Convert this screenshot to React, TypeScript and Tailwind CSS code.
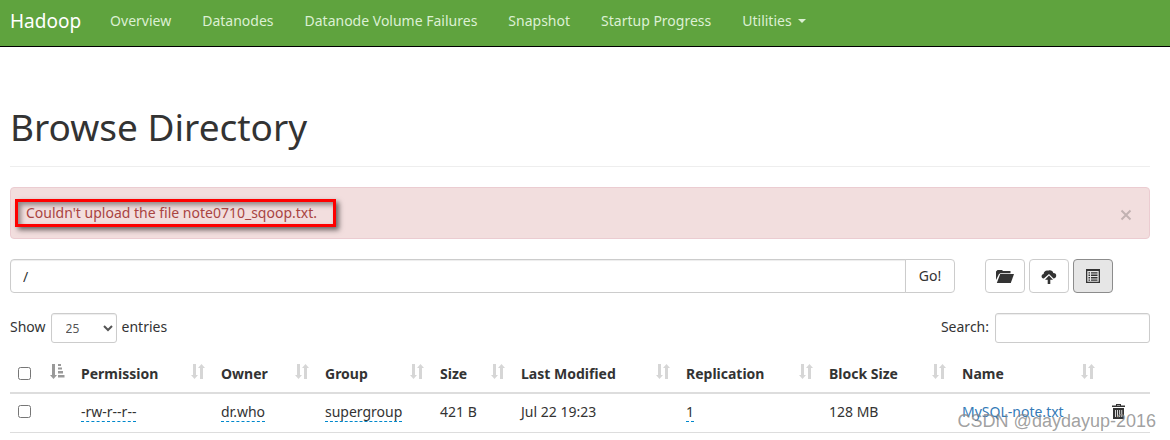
import React, { useState } from "react";

const navItems = ["Overview", "Datanodes", "Datanode Volume Failures", "Snapshot", "Startup Progress"];

const columns = [
  { label: "Permission", width: "w-[140px]" },
  { label: "Owner", width: "w-[104px]" },
  { label: "Group", width: "w-[115px]" },
  { label: "Size", width: "w-[81px]" },
  { label: "Last Modified", width: "w-[165px]" },
  { label: "Replication", width: "w-[143px]" },
  { label: "Block Size", width: "w-[133px]" },
  { label: "Name", width: "w-[149px]" },
];

function SortBoth() {
  return (
    <svg width="14" height="15" viewBox="0 0 14 15" fill="currentColor" className="mb-1 shrink-0 text-[#d6d6d6]" aria-hidden="true">
      <path d="M2 0h3v11h2L3.500 15 0 11h2z" />
      <path d="M9 15h3V4h2L10.500 0 7 4h2z" />
    </svg>
  );
}

function SortAscending() {
  return (
    <svg width="15" height="15" viewBox="0 0 15 15" fill="currentColor" className="mb-1 shrink-0 text-[#999999]" aria-hidden="true">
      <path d="M2 0h3v11h2L3.500 15 0 11h2z" />
      <path d="M8 0h3v2H8zM8 3.500h4v2H8zM8 7h5v2.500H8zM8 11h6.500v2.500H8z" />
    </svg>
  );
}

function FolderIcon() {
  return (
    <svg width="18" height="14" viewBox="0 0 18 14" fill="currentColor" aria-hidden="true">
      <path d="M0 11V2.500L1.500 1H6l1 1h7.500v2.200H4.500L3 5z" />
      <path d="M4.200 5H18l-3.200 9H.8z" />
    </svg>
  );
}

function CloudUploadIcon() {
  return (
    <svg width="16" height="15" viewBox="0 0 16 15" fill="currentColor" aria-hidden="true">
      <path d="M2.800 9.500C.9 9.300.2 7.900.7 6.500c.3-.9 1-1.400 1.900-1.500C2.800 2.600 5 1 7.100 1.700c2-1.200 4.700-.1 5.200 2.300 2 0 3.200 1.300 2.900 3-.2 1.400-1.200 2.300-2.700 2.500L8 5z" />
      <path d="M8 6.500l4 4.300H9.300V15H6.700v-4.200H4z" />
    </svg>
  );
}

function ListIcon() {
  return (
    <svg width="14" height="14" viewBox="0 0 14 14" fill="currentColor" aria-hidden="true">
      <path fillRule="evenodd" d="M0 0h14v14H0zM1.300 2v10.800h11.400V2z" />
      <path d="M2.500 3.200H4v1.400H2.500zM5 3.200h6.500v1.400H5zM2.500 5.600H4V7H2.500zM5 5.600h6.500V7H5zM2.500 8H4v1.400H2.500zM5 8h6.500v1.400H5zM2.500 10.400H4v1.400H2.500zM5 10.400h6.500v1.400H5z" />
    </svg>
  );
}

function TrashIcon() {
  return (
    <svg width="13" height="15" viewBox="0 0 13 15" fill="currentColor" aria-hidden="true">
      <path fillRule="evenodd" d="M4 0h5v1.500h4V3H0V1.500h4zM5 1v.500h3V1z" />
      <path fillRule="evenodd" d="M1 4h11v11H1zM3 6v7h.800V6zM5.200 6v7H6V6zM7.300 6v7h.800V6zM9.400 6v7h.800V6z" />
    </svg>
  );
}

function Editable({ children }: { children: React.ReactNode }) {
  return <span className="border-b border-dashed border-[#0088cc]">{children}</span>;
}

export default function App() {
  const [path, setPath] = useState("/");
  const [query, setQuery] = useState("");
  const [size, setSize] = useState("25");
  const toolButton = "flex h-[34px] w-10 items-center justify-center rounded border";

  return (
    <div className="relative bg-white font-['Noto_Sans',sans-serif] text-sm leading-5 text-[#333333]">
      <header className="border-b border-black bg-[#5fa33e]">
        <nav className="flex h-[46px] items-center gap-px px-[10px] pb-1">
          <a href="#" className="mr-[13px] text-[19px] text-white">Hadoop</a>
          {navItems.map((item) => (
            <a key={item} href="#" className="px-[15px] text-[#dcf0d3]">{item}</a>
          ))}
          <a href="#" className="flex items-center gap-[6px] px-[15px] text-[#dcf0d3]">
            Utilities
            <svg width="8" height="4" viewBox="0 0 8 4" fill="currentColor" aria-hidden="true"><path d="M0 0h8L4 4z" /></svg>
          </a>
        </nav>
      </header>

      <main className="pr-5 pl-[10px]">
        <h1 className="border-b border-[#eeeeee] pt-[60px] pb-[19px] text-[37px] leading-10">Browse Directory</h1>

        <div role="alert" className="mt-5 flex h-[52px] items-center justify-between rounded border border-[#ebccd1] bg-[#f2dede] pr-[17px] pl-1 text-[#a94442]">
          <p className="min-w-[321px] border-3 border-[#fe0000] px-2 py-px shadow-[3px_3px_5px_rgba(0,0,0,0.55),inset_3px_3px_5px_rgba(0,0,0,0.4)]">
            Couldn't upload the file note0710_sqoop.txt.
          </p>
          <button aria-label="Close" className="mt-1 text-[#c2b2b2]">
            <svg width="12" height="12" viewBox="0 0 12 12" fill="none" stroke="currentColor" strokeWidth="2" aria-hidden="true"><path d="M1.500 1.500l9 9M10.500 1.500l-9 9" /></svg>
          </button>
        </div>

        <div className="mt-5 flex pr-[37px]">
          <input aria-label="Directory" value={path} onChange={(e) => setPath(e.target.value)} className="h-[34px] min-w-0 flex-1 rounded-l border border-[#cccccc] px-3 shadow-[inset_0_1px_1px_rgba(0,0,0,0.075)] outline-none" />
          <button className="-ml-px h-[34px] w-[50px] rounded-r border border-[#cccccc]">Go!</button>
          <div className="ml-[30px] flex gap-1">
            <button aria-label="Create directory" className={`${toolButton} border-[#cccccc]`}><FolderIcon /></button>
            <button aria-label="Upload files" className={`${toolButton} border-[#cccccc]`}><CloudUploadIcon /></button>
            <button aria-label="Cut and paste" className={`${toolButton} border-[#8c8c8c] bg-[#e6e6e6]`}><ListIcon /></button>
          </div>
        </div>

        <div className="mt-5 flex h-[30px] justify-between">
          <label className="flex gap-[5px]">
            <span className="pt-1">Show</span>
            <select value={size} onChange={(e) => setSize(e.target.value)} className="h-[30px] w-[66px] rounded-[3px] border border-[#cccccc] bg-white pl-[10px] text-xs text-[#555555] shadow-[inset_0_1px_1px_rgba(0,0,0,0.075)]">
              <option>25</option>
              <option>50</option>
              <option>100</option>
            </select>
            <span className="pt-1">entries</span>
          </label>
          <label className="flex gap-[6px]">
            <span className="pt-1">Search:</span>
            <input type="search" value={query} onChange={(e) => setQuery(e.target.value)} className="h-[30px] w-[155px] rounded-[3px] border border-[#cccccc] px-2 shadow-[inset_0_1px_1px_rgba(0,0,0,0.075)] outline-none" />
          </label>
        </div>

        <table className="mt-3 w-full table-fixed border-collapse text-left">
          <thead>
            <tr className="h-[38px] border-b-2 border-[#dddddd]">
              <th className="w-[63px] px-2">
                <div className="flex items-center justify-between">
                  <input type="checkbox" aria-label="Select all" className="size-[13px]" />
                  <SortAscending />
                </div>
              </th>
              {columns.map((c) => (
                <th key={c.label} className={`${c.width} px-2 font-bold whitespace-nowrap`}>
                  <div className="flex items-center justify-between">
                    <span>{c.label}</span>
                    <SortBoth />
                  </div>
                </th>
              ))}
              <th className="w-[47px]" aria-label="Delete" />
            </tr>
          </thead>
          <tbody>
            <tr className="h-[39px] border-b border-[#dddddd] *:px-2 *:pb-[2px] *:whitespace-nowrap">
              <td><input type="checkbox" aria-label="Select MySQL-note.txt" className="block size-[13px]" /></td>
              <td><Editable>-rw-r--r--</Editable></td>
              <td><Editable>dr.who</Editable></td>
              <td><Editable>supergroup</Editable></td>
              <td>421 B</td>
              <td>Jul 22 19:23</td>
              <td><Editable>1</Editable></td>
              <td>128 MB</td>
              <td><a href="#" className="text-[#337ab7]">MySQL-note.txt</a></td>
              <td><button aria-label="Delete file" className="ml-px block"><TrashIcon /></button></td>
            </tr>
          </tbody>
        </table>
      </main>

      <div className="pointer-events-none absolute right-[14px] bottom-0 font-['Liberation_Sans',sans-serif] text-lg leading-6 text-[#888888]/80">CSDN @daydayup-2016</div>
    </div>
  );
}
